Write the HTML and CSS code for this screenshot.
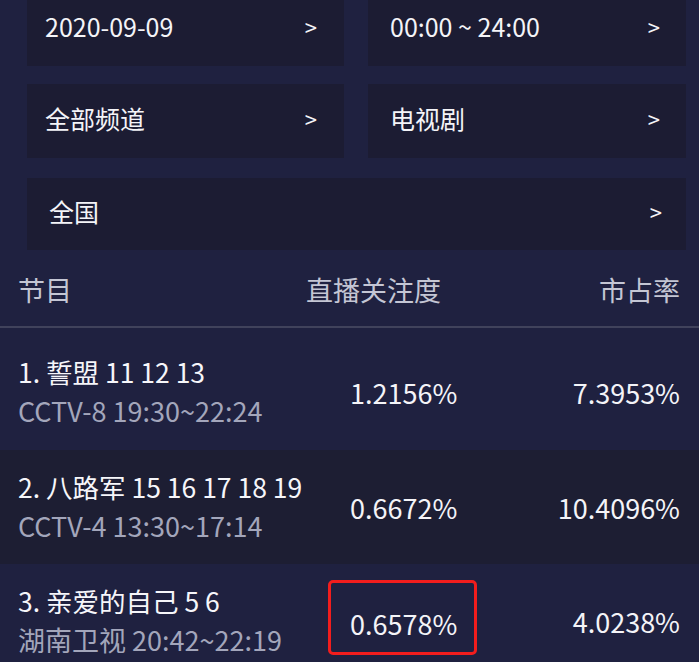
FILE: index.html
```html
<!DOCTYPE html>
<html lang="zh-CN">
<head>
<meta charset="utf-8">
<link rel="stylesheet" href="styles.css">
</head>
<body>
<div class="page">
  <section class="filters">
    <div class="card"><span class="label num">2020-09-09</span><span class="chev">&gt;</span></div>
    <div class="card card-r"><span class="label num">00:00 ~ 24:00</span><span class="chev">&gt;</span></div>
    <div class="card"><span class="label">全部频道</span><span class="chev">&gt;</span></div>
    <div class="card card-r"><span class="label">电视剧</span><span class="chev">&gt;</span></div>
    <div class="card card-wide"><span class="label">全国</span><span class="chev">&gt;</span></div>
  </section>
  <div class="thead">
    <span class="th">节目</span>
    <span class="th">直播关注度</span>
    <span class="th th-r">市占率</span>
  </div>
  <div class="row row-first">
    <div class="prog">
      <div class="title">1. 誓盟 11 12 13</div>
      <div class="sub">CCTV-8 19:30~22:24</div>
    </div>
    <div class="val">1.2156%</div>
    <div class="val val-r">7.3953%</div>
  </div>
  <div class="row row-dark">
    <div class="prog">
      <div class="title">2. 八路军 15 16 17 18 19</div>
      <div class="sub">CCTV-4 13:30~17:14</div>
    </div>
    <div class="val">0.6672%</div>
    <div class="val val-r">10.4096%</div>
  </div>
  <div class="row">
    <div class="prog">
      <div class="title">3. 亲爱的自己 5 6</div>
      <div class="sub">湖南卫视 20:42~22:19</div>
    </div>
    <div class="val"><span class="mark">0.6578%</span></div>
    <div class="val val-r">4.0238%</div>
  </div>
</div>
</body>
</html>
```
FILE: styles.css
```css
html, body {
  margin: 0;
  padding: 0;
  background: #1f2140;
}
body {
  font-family: "Noto Sans CJK SC", "Noto Sans", sans-serif;
  color: #f4f4f8;
  overflow: hidden;
}
.page {
  width: 699px;
  height: 662px;
  overflow: hidden;
}
.filters {
  display: grid;
  grid-template-columns: 317px 318px;
  column-gap: 24px;
  row-gap: 18px;
  margin-top: -8px;
  padding: 0 13px 0 27px;
}
.card {
  background: #1c1c33;
  height: 74px;
  box-sizing: border-box;
  display: flex;
  align-items: center;
  justify-content: space-between;
  padding: 0 27px 6px 18px;
  font-size: 25px;
}
.card-r {
  padding-left: 22px;
  padding-right: 26px;
}
.card-wide {
  grid-column: 1 / 3;
  height: 72px;
  margin-top: 2px;
  padding-left: 22px;
  padding-right: 24px;
}
.label {
  white-space: nowrap;
}
.chev {
  font-size: 22px;
}
.thead {
  display: grid;
  grid-template-columns: 288px 1fr auto;
  align-items: center;
  height: 74px;
  margin-top: 2px;
  padding: 0 19px 0 18px;
  border-bottom: 2px solid #40425b;
}
.th {
  font-size: 27px;
  color: #c4c6d4;
}
.th-r {
  text-align: right;
}
.row {
  display: grid;
  grid-template-columns: 332px 1fr auto;
  align-items: center;
  height: 114px;
  padding: 0 19px 0 18px;
}
.row-first {
  height: 122px;
  padding-top: 6px;
  box-sizing: border-box;
}
.row-dark {
  background: #1d1e33;
}
.prog {
  display: flex;
  flex-direction: column;
  white-space: nowrap;
}
.title {
  font-size: 26.5px;
  line-height: 39px;
  margin-top: -2px;
  color: #f6f6fa;
}
.sub {
  font-size: 27px;
  line-height: 39px;
  color: #a3a6bb;
}
.val {
  font-size: 27px;
  color: #f4f4f8;
}
.val-r {
  text-align: right;
}
.mark {
  display: inline-block;
  line-height: 39px;
  border: 3px solid #f21d1d;
  border-radius: 5px;
  padding: 21px 17px 9px 19px;
  margin-left: -22px;
  margin-top: -8px;
}
```
